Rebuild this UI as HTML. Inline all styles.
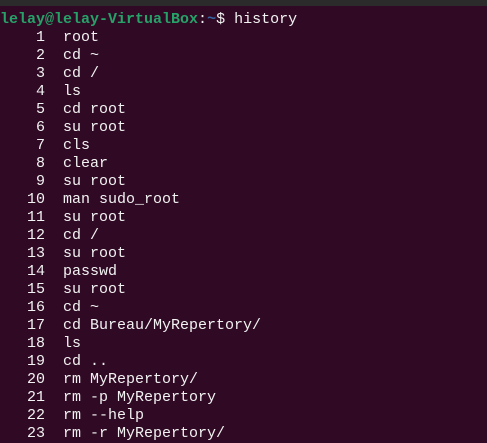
<!DOCTYPE html>
<html><head><style>
html,body{margin:0;padding:0;background:#300a24;width:487px;height:441px;overflow:hidden}
.top{height:6px;background:#2b2b2b}
pre{margin:0;padding:0;position:absolute;top:11px;left:0;font-family:"Liberation Mono",monospace;font-size:15px;line-height:18px;color:#f2f2f2}
.g{color:#26a269;font-weight:bold}.b{color:#3465a4;font-weight:bold}
</style></head><body><div class="top"></div>
<pre><span class="g">lelay@lelay-VirtualBox</span>:<span class="b">~</span>$ history
    1  root
    2  cd ~
    3  cd /
    4  ls
    5  cd root
    6  su root
    7  cls
    8  clear
    9  su root
   10  man sudo_root
   11  su root
   12  cd /
   13  su root
   14  passwd
   15  su root
   16  cd ~
   17  cd Bureau/MyRepertory/
   18  ls
   19  cd ..
   20  rm MyRepertory/
   21  rm -p MyRepertory
   22  rm --help
   23  rm -r MyRepertory/</pre>
</body></html>
